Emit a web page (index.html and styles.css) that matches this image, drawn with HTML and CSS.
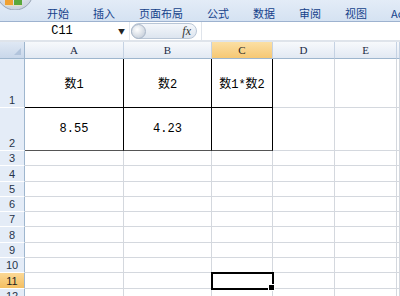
FILE: index.html
```html
<!DOCTYPE html>
<html>
<head>
  <title>Book1 - Excel</title>
  <link rel="stylesheet" href="styles.css">
</head>
<body>
  <div class="tabs">
    <svg class="office-btn" width="34" height="10" viewBox="0 0 34 10">
      <defs>
        <radialGradient id="rim" cx="50%" cy="30%" r="70%">
          <stop offset="0" stop-color="#ffffff"/>
          <stop offset="1" stop-color="#c9d1dc"/>
        </radialGradient>
      </defs>
      <circle cx="15" cy="-8" r="18" fill="url(#rim)" stroke="#9aa7b8"/>
      <rect x="5" y="0" width="8" height="6" fill="#f0a030"/>
      <rect x="14" y="0" width="8" height="6" fill="#5aa83a"/>
      <rect x="5" y="5" width="17" height="1" fill="#e8e0c0"/>
    </svg>
    <span class="tab">开始</span>
    <span class="tab">插入</span>
    <span class="tab">页面布局</span>
    <span class="tab">公式</span>
    <span class="tab">数据</span>
    <span class="tab">审阅</span>
    <span class="tab">视图</span>
    <span class="tab">Acrobat</span>
  </div>

  <div class="formula-bar">
    <div class="name-box">
      <span class="name">C11</span>
      <span class="arrow">&#9660;</span>
    </div>
    <div class="fx-box">
      <span class="fx-knob"></span>
      <span class="fx">fx</span>
    </div>
    <div class="formula-input"></div>
  </div>

  <div class="sheet">
    <div class="row head">
      <div class="corner"></div>
      <div class="col-head">A</div>
      <div class="col-head">B</div>
      <div class="col-head sel">C</div>
      <div class="col-head">D</div>
      <div class="col-head">E</div>
      <div class="col-head"></div>
    </div>
    <div class="row r1">
      <div class="row-head">1</div>
      <div class="cell boxed">数1</div>
      <div class="cell boxed">数2</div>
      <div class="cell boxed">数1*数2</div>
      <div class="cell"></div>
      <div class="cell"></div>
      <div class="cell"></div>
    </div>
    <div class="row r2">
      <div class="row-head">2</div>
      <div class="cell boxed">8.55</div>
      <div class="cell boxed">4.23</div>
      <div class="cell boxed"></div>
      <div class="cell"></div>
      <div class="cell"></div>
      <div class="cell"></div>
    </div>
    <div class="row"><div class="row-head">3</div><div class="cell"></div><div class="cell"></div><div class="cell"></div><div class="cell"></div><div class="cell"></div><div class="cell"></div></div>
    <div class="row"><div class="row-head">4</div><div class="cell"></div><div class="cell"></div><div class="cell"></div><div class="cell"></div><div class="cell"></div><div class="cell"></div></div>
    <div class="row"><div class="row-head">5</div><div class="cell"></div><div class="cell"></div><div class="cell"></div><div class="cell"></div><div class="cell"></div><div class="cell"></div></div>
    <div class="row"><div class="row-head">6</div><div class="cell"></div><div class="cell"></div><div class="cell"></div><div class="cell"></div><div class="cell"></div><div class="cell"></div></div>
    <div class="row"><div class="row-head">7</div><div class="cell"></div><div class="cell"></div><div class="cell"></div><div class="cell"></div><div class="cell"></div><div class="cell"></div></div>
    <div class="row"><div class="row-head">8</div><div class="cell"></div><div class="cell"></div><div class="cell"></div><div class="cell"></div><div class="cell"></div><div class="cell"></div></div>
    <div class="row"><div class="row-head">9</div><div class="cell"></div><div class="cell"></div><div class="cell"></div><div class="cell"></div><div class="cell"></div><div class="cell"></div></div>
    <div class="row"><div class="row-head">10</div><div class="cell"></div><div class="cell"></div><div class="cell"></div><div class="cell"></div><div class="cell"></div><div class="cell"></div></div>
    <div class="row"><div class="row-head sel">11</div><div class="cell"></div><div class="cell"></div><div class="cell active"></div><div class="cell"></div><div class="cell"></div><div class="cell"></div></div>
    <div class="row"><div class="row-head">12</div><div class="cell"></div><div class="cell"></div><div class="cell"></div><div class="cell"></div><div class="cell"></div><div class="cell"></div></div>
  </div>
</body>
</html>
```

FILE: styles.css
```css
body {
  margin: 0;
  padding: 0;
  width: 400px;
  height: 296px;
  overflow: hidden;
  background-color: #fff;
  font-family: "Noto Sans CJK SC", sans-serif;
}

.tabs {
  display: flex;
  align-items: flex-start;
  gap: 24px;
  height: 22px;
  box-sizing: border-box;
  background: linear-gradient(#e3ecf7, #d5e2f2);
  border-bottom: 1px solid #9db2cf;
  white-space: nowrap;
  overflow: hidden;
}

.office-btn {
  display: block;
  flex: none;
  margin-right: -11px;
}

.tab {
  font-size: 11px;
  line-height: 22px;
  padding-top: 2px;
  color: #15428b;
}

.formula-bar {
  display: flex;
  height: 20px;
  box-sizing: border-box;
  background-color: #fff;
  border-bottom: 2px solid #dfe4eb;
}

.name-box {
  width: 130px;
  display: flex;
  align-items: center;
  box-sizing: border-box;
  border-right: 1px solid #e4e8ee;
}

.name {
  flex: 1;
  text-align: center;
  padding-left: 6px;
  font-family: "Liberation Mono", monospace;
  font-size: 12px;
  color: #000;
}

.arrow {
  font-size: 7px;
  color: #222;
  margin-right: 4px;
}

.fx-box {
  width: 66px;
  height: 16px;
  margin: 1px 4px 0 1px;
  display: flex;
  align-items: center;
  justify-content: space-between;
  border: 1px solid #b9c6d6;
  border-radius: 9px;
  box-sizing: border-box;
  background: linear-gradient(#f4f7fb, #dde5ef);
}

.fx-knob {
  width: 13px;
  height: 13px;
  border-radius: 50%;
  background: radial-gradient(circle at 40% 35%, #fff, #b9c4d2);
  border: 1px solid #a9b6c7;
  margin-left: -1px;
}

.fx {
  font-family: "Liberation Serif", serif;
  font-style: italic;
  font-size: 12px;
  color: #333;
  margin-right: 5px;
}

.formula-input {
  flex: 1;
  border-left: 1px solid #dfe4eb;
}

.sheet {
  font-family: "Liberation Mono", "Noto Sans CJK SC", monospace;
  font-size: 12px;
}

.row {
  display: grid;
  grid-template-columns: 25px 99px 88px 61px 62px 62px 1fr;
  height: 15.3px;
}

.row.head {
  height: 17px;
}

.row.r1 {
  height: 49px;
}

.row.r2 {
  height: 43px;
}

.corner {
  background: linear-gradient(#dfe8f4, #c9d7ea);
  border-right: 1px solid #9eb6ce;
  border-bottom: 1px solid #9eb6ce;
  position: relative;
}

.corner::after {
  content: "";
  position: absolute;
  right: 3px;
  bottom: 3px;
  border-left: 7px solid transparent;
  border-bottom: 7px solid #b2c4dc;
}

.col-head {
  display: flex;
  align-items: center;
  justify-content: center;
  font-family: "Liberation Serif", serif;
  font-size: 11px;
  color: #1b2a44;
  background: linear-gradient(#f7f9fc, #e2e9f3);
  border-right: 1px solid #c5d2e3;
  border-bottom: 1px solid #9eb6ce;
}

.row-head {
  display: flex;
  align-items: flex-end;
  justify-content: center;
  font-family: "Liberation Sans", sans-serif;
  font-size: 11px;
  line-height: 14px;
  color: #27344a;
  background-color: #e4ecf7;
  border-right: 1px solid #9eb6ce;
  border-bottom: 1px solid #fff;
}

.sel {
  background: linear-gradient(#fbdfa4, #f6c874);
  color: #1f1f1f;
}

.row-head.sel {
  background: linear-gradient(#fbd895, #f4bf62);
}

.cell {
  display: flex;
  align-items: center;
  justify-content: center;
  border-right: 1px solid #d4d8de;
  border-bottom: 1px solid #d4d8de;
  color: #000;
}

.cell.boxed {
  border-right-color: #000;
  border-bottom-color: #000;
}

.r2 .cell.boxed {
  border-bottom-color: #555;
}

.cell.active {
  outline: 2px solid #000;
  outline-offset: -1px;
  position: relative;
  z-index: 1;
}

.cell.active::after {
  content: "";
  position: absolute;
  right: -3px;
  bottom: -3px;
  width: 5px;
  height: 5px;
  background-color: #000;
  border: 1px solid #fff;
}
```
